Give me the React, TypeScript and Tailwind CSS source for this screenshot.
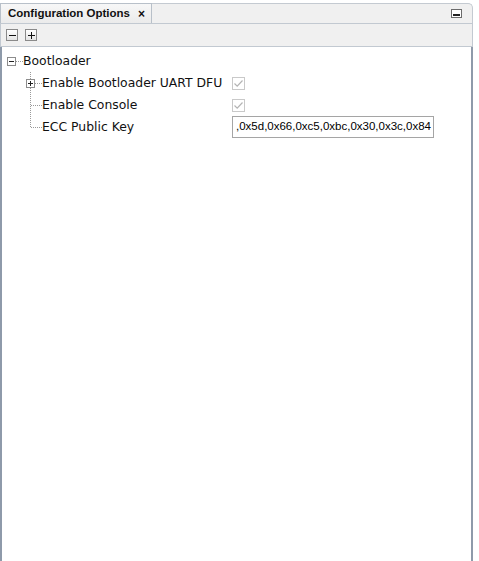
import React from "react";

const Expander = ({ open }: { open: boolean }) => (
  <>
    <rect x="0.5" y="7.5" width="8" height="8" fill="#fff" stroke="#8c8c8c" />
    <line x1="2" y1="11.5" x2="7" y2="11.5" stroke="#222" />
    {!open && <line x1="4.5" y1="9" x2="4.5" y2="14" stroke="#222" />}
  </>
);

const Check = () => (
  <div className="flex h-[13px] w-[13px] items-center justify-center border border-[#c9c9c9] bg-white">
    <svg width="11" height="11" viewBox="0 0 11 11">
      <path d="M1.5 5.5 L4.2 8.2 L9.5 2.5" fill="none" stroke="#b4b4b4" strokeWidth="1.2" />
    </svg>
  </div>
);

type Row = { label: string; kind: "check" | "text"; expandable?: boolean; last?: boolean };

const rows: Row[] = [
  { label: "Enable Bootloader UART DFU", kind: "check", expandable: true },
  { label: "Enable Console", kind: "check" },
  { label: "ECC Public Key", kind: "text", last: true },
];

const App: React.FC = () => {
  return (
    <div className="h-[561px] w-[479px] overflow-hidden bg-white font-['DejaVu_Sans',sans-serif] text-[#111]">
      <div className="flex h-full w-[473px] flex-col">
        {/* tab strip */}
        <div className="flex h-[23px] shrink-0 pt-[3px]">
          <div className="flex w-[152px] items-center gap-[8px] border-l border-r border-t border-[#b8c0c9] bg-gradient-to-b from-[#f7f7f7] to-[#ebebeb] pl-[7px] font-['Liberation_Sans',sans-serif] text-[11.5px] font-bold">
            <span>Configuration Options</span>
            <span className="text-[12px] leading-none">×</span>
          </div>
          <div className="flex flex-1 items-center justify-end rounded-tr-[5px] border-r border-t border-[#c4cad1] bg-[#f0f0f0] pr-[10px]">
            <div className="flex h-[9px] w-[11px] items-end justify-center border border-[#6b6b6b] bg-white pb-[1px]">
              <div className="h-[2px] w-[7px] bg-[#222]" />
            </div>
          </div>
        </div>
        {/* toolbar */}
        <div className="flex h-[24px] shrink-0 items-center gap-[7px] border-b border-l border-r border-t border-[#c2c9d1] bg-[#f0f0f0] pl-[5px]">
          <div className="flex h-[12px] w-[12px] items-center justify-center border border-[#8a8a8a] bg-gradient-to-b from-white to-[#e4e4e4]">
            <div className="h-[1px] w-[7px] bg-[#111]" />
          </div>
          <div className="relative flex h-[12px] w-[12px] items-center justify-center border border-[#8a8a8a] bg-gradient-to-b from-white to-[#e4e4e4]">
            <div className="h-[1px] w-[7px] bg-[#111]" />
            <div className="absolute h-[7px] w-[1px] bg-[#111]" />
          </div>
        </div>
        {/* tree */}
        <div className="flex-1 border-l-2 border-r-2 border-[#8e9aaa] bg-white pt-[3px] text-[12.4px]">
          <div className="flex h-[22px] items-center pl-[5px]">
            <svg width="16" height="22" className="shrink-0">
              <Expander open />
              <line x1="9" y1="11.5" x2="16" y2="11.5" stroke="#9a9a9a" strokeDasharray="1 1" />
            </svg>
            <span>Bootloader</span>
          </div>
          {rows.map((r) => (
            <div key={r.label} className="flex h-[22px] items-center pl-[24px]">
              <svg width="16" height="22" className="shrink-0">
                <line x1="4.5" y1="0" x2="4.5" y2={r.last ? 11 : 22} stroke="#9a9a9a" strokeDasharray="1 1" />
                <line x1="5" y1="11.5" x2="16" y2="11.5" stroke="#9a9a9a" strokeDasharray="1 1" />
                {r.expandable && <Expander open={false} />}
              </svg>
              <span className="w-[190px] shrink-0">{r.label}</span>
              {r.kind === "check" ? (
                <Check />
              ) : (
                <div className="flex h-[22px] w-[202px] items-center overflow-hidden whitespace-nowrap border border-[#a5a5a5] pl-[3px] font-['Liberation_Sans',sans-serif] text-[11.5px] text-black">
                  ,0x5d,0x66,0xc5,0xbc,0x30,0x3c,0x84
                </div>
              )}
            </div>
          ))}
        </div>
      </div>
    </div>
  );
};

export default App;
